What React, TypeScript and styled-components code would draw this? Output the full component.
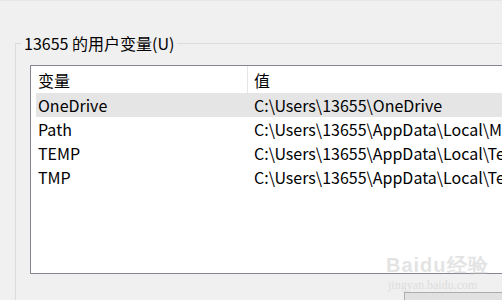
import styled, { createGlobalStyle } from "styled-components";

const GlobalStyle = createGlobalStyle`
  html, body {
    margin: 0;
    padding: 0;
    background: #f0f0f0;
  }
  body {
    font-family: "Noto Sans CJK SC", "Noto Sans", sans-serif;
    font-size: 16px;
    color: #000;
  }
`;

const Window = styled.div`
  position: relative;
  width: 502px;
  height: 300px;
  overflow: hidden;
  background: #f0f0f0;
  display: flex;
  flex-direction: column;
`;

const TopStrip = styled.div`
  height: 3px;
  background: #f9f9f9;
  border-bottom: 1px solid #e6e6e6;
`;

const GroupBox = styled.fieldset`
  margin: 31px 0 0 15px;
  padding: 0;
  min-width: 0;
  border: 1px solid #dcdcdc;
  border-right: none;
  border-bottom: none;
  flex: 1;
`;

const Legend = styled.legend`
  margin-left: 5px;
  padding: 0 3px;
  font-size: 16px;
  line-height: 22px;
  white-space: nowrap;
`;

const ListView = styled.div`
  margin: 11px 0 0 14px;
  width: 640px;
  height: 207px;
  border: 1px solid #828790;
  background: #fff;
`;

const HeaderRow = styled.div`
  display: flex;
  height: 27px;
  align-items: center;
`;

const HeaderCell = styled.div<{ $width?: number }>`
  flex: ${(p) => (p.$width ? `0 0 ${p.$width}px` : "1")};
  height: 100%;
  display: flex;
  align-items: center;
  padding-left: ${(p) => (p.$width ? 7 : 6)}px;
  box-sizing: border-box;
  border-right: ${(p) => (p.$width ? "1px solid #e5e5e5" : "none")};
`;

const Row = styled.div<{ $selected?: boolean }>`
  display: flex;
  height: 24px;
  align-items: center;
  margin-left: 5px;
  background: ${(p) => (p.$selected ? "#e5e5e5" : "transparent")};
`;

const NameCell = styled.div`
  flex: 0 0 212px;
  padding-left: 2px;
  box-sizing: border-box;
  white-space: nowrap;
`;

const ValueCell = styled.div`
  flex: 1;
  padding-left: 6px;
  white-space: nowrap;
`;

const ButtonRow = styled.div`
  display: flex;
  margin: 18px 0 0 388px;
`;

const Button = styled.button`
  width: 120px;
  height: 24px;
  border: 1px solid #adadad;
  background: #e1e1e1;
  flex-shrink: 0;
`;

const Watermark = styled.div`
  position: absolute;
  left: 386px;
  top: 255px;
  color: rgba(200, 200, 200, 0.5);
  pointer-events: none;
  line-height: 1;
  white-space: nowrap;
`;

const WatermarkLogo = styled.div`
  font-family: "Liberation Sans", sans-serif;
  font-weight: bold;
  font-size: 20px;
  letter-spacing: 1px;
`;

const WatermarkUrl = styled.div`
  font-family: "Liberation Serif", serif;
  font-size: 12px;
  margin-top: 4px;
  margin-left: 2px;
`;

const vars = [
  { name: "OneDrive", value: "C:\\Users\\13655\\OneDrive", selected: true },
  { name: "Path", value: "C:\\Users\\13655\\AppData\\Local\\Microsoft\\WindowsApps;" },
  { name: "TEMP", value: "C:\\Users\\13655\\AppData\\Local\\Temp" },
  { name: "TMP", value: "C:\\Users\\13655\\AppData\\Local\\Temp" },
];

export default function App() {
  return (
    <Window>
      <GlobalStyle />
      <TopStrip />
      <GroupBox>
        <Legend>13655 的用户变量(U)</Legend>
        <ListView>
          <HeaderRow>
            <HeaderCell $width={217}>变量</HeaderCell>
            <HeaderCell>值</HeaderCell>
          </HeaderRow>
          {vars.map((v) => (
            <Row key={v.name} $selected={v.selected}>
              <NameCell>{v.name}</NameCell>
              <ValueCell>{v.value}</ValueCell>
            </Row>
          ))}
        </ListView>
        <ButtonRow>
          <Button />
        </ButtonRow>
      </GroupBox>
      <Watermark>
        <WatermarkLogo>Baidu经验</WatermarkLogo>
        <WatermarkUrl>jingyan.baidu.com</WatermarkUrl>
      </Watermark>
    </Window>
  );
}
